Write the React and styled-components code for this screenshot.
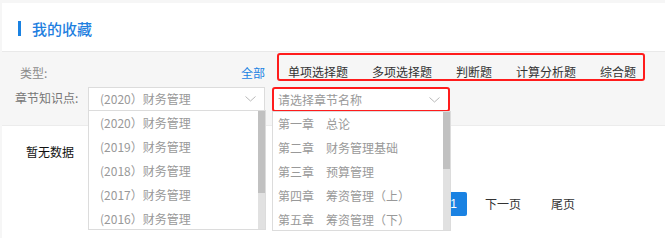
import React from "react";
import styled, { createGlobalStyle } from "styled-components";

const Global = createGlobalStyle`
  html, body { margin: 0; padding: 0; background: #f6f6f6; }
  body { font-family: "Noto Sans CJK SC", "Noto Sans", sans-serif; font-size: 12px; color: #333; }
  * { box-sizing: border-box; }
`;

const Page = styled.div`
  padding: 3px 0 0 2px;
  width: 680px;
  height: 238px;
  overflow: hidden;
`;

const HeaderCard = styled.div`
  height: 49px;
  background: #fff;
  border-bottom: 1px solid #e9e9e9;
  display: flex;
  align-items: center;
  padding: 2px 0 0 16px;
`;

const TitleBar = styled.span`
  width: 3px;
  height: 15px;
  background: #1a82e2;
  margin-right: 11px;
`;

const Title = styled.h1`
  margin: 0;
  font-size: 15px;
  line-height: 15px;
  font-weight: 500;
  color: #1f7fdf;
`;

const Filters = styled.div`
  padding: 1px 0 13px 0;
`;

const TypeRow = styled.div`
  display: flex;
  height: 28px;
`;

const RowLabel = styled.span`
  align-self: ${(p) => (p.$bottom ? "flex-end" : "flex-start")};
  padding-bottom: ${(p) => (p.$bottom ? "2px" : "0")};
  margin-top: ${(p) => (p.$bottom ? "0" : "5px")};
  margin-left: ${(p) => p.$left}px;
  width: ${(p) => p.$width}px;
  line-height: 12px;
  color: ${(p) => p.$color};
  white-space: nowrap;
`;

const AllLink = styled.a`
  align-self: flex-end;
  padding-bottom: 2px;
  line-height: 12px;
  color: #1a82e2;
  cursor: pointer;
`;

const TypeGroup = styled.div`
  margin-left: 12px;
  width: 368px;
  height: 28px;
  border: 2px solid #ff1c1c;
  border-radius: 3px;
  display: flex;
  gap: 24px;
  padding: 11px 0 0 9px;
`;

const TypeOption = styled.span`
  line-height: 12px;
  color: #333;
  white-space: nowrap;
  cursor: pointer;
`;

const ChapterRow = styled.div`
  display: flex;
  align-items: flex-start;
  margin-top: 6px;
  height: 25px;
`;

const SelectWrap = styled.div`
  position: relative;
  margin-left: ${(p) => p.$left || 0}px;
`;

const SelectBox = styled.div`
  width: ${(p) => p.$width}px;
  height: ${(p) => (p.$marked ? 25 : 24)}px;
  background: #fff;
  border: ${(p) => (p.$marked ? "2px solid #ff1c1c" : "1px solid #dcdcdc")};
  border-radius: ${(p) => (p.$marked ? "3px" : "0")};
  display: flex;
  align-items: center;
  justify-content: space-between;
  padding: 0 8px 0 ${(p) => (p.$marked ? 4 : 11)}px;
  color: #999;
  line-height: 14px;
`;

const Chevron = () => (
  <svg width="11" height="6" viewBox="0 0 11 6" fill="none">
    <path d="M0.5 0.5 L5.5 5 L10.5 0.5" stroke="#b8b8b8" strokeWidth="1" />
  </svg>
);

const Menu = styled.div`
  position: absolute;
  z-index: 5;
  left: 0;
  top: ${(p) => p.$top}px;
  width: ${(p) => p.$width}px;
  height: 120px;
  background: #fff;
  border: 1px solid #dcdcdc;
  overflow: hidden;
`;

const MenuList = styled.ul`
  margin: 0;
  padding: 0;
  list-style: none;
`;

const MenuItem = styled.li`
  height: 24px;
  line-height: 24px;
  padding-left: ${(p) => p.$pad}px;
  color: #999;
  white-space: nowrap;
`;

const ScrollTrack = styled.div`
  position: absolute;
  top: 0;
  right: 0;
  bottom: 0;
  width: 7px;
  background: #e1e1e1;
`;

const ScrollThumb = styled.div`
  width: 100%;
  background: #c1c1c1;
`;

const ContentCard = styled.div`
  background: #fff;
  border-top: 1px solid #ececec;
  height: 120px;
  padding-top: 18px;
`;

const Empty = styled.div`
  padding-left: 24px;
  line-height: 16px;
  color: #111;
`;

const Pager = styled.div`
  display: flex;
  margin-top: 32px;
  padding-left: 435px;
`;

const PageLink = styled.span`
  margin: 0 3px;
  height: 24px;
  line-height: 24px;
  padding: ${(p) => (p.$active ? "0" : "0 12px")};
  width: ${(p) => (p.$active ? "27px" : "auto")};
  text-align: center;
  background: ${(p) => (p.$active ? "#1a82e2" : "transparent")};
  color: ${(p) => (p.$active ? "#fff" : "#333")};
  border-radius: 2px;
  font-family: ${(p) => (p.$active ? '"Liberation Sans", sans-serif' : "inherit")};
`;

const types = ["单项选择题", "多项选择题", "判断题", "计算分析题", "综合题"];
const years = [2020, 2019, 2018, 2017, 2016];
const chapters = [
  "第一章　总论",
  "第二章　财务管理基础",
  "第三章　预算管理",
  "第四章　筹资管理（上）",
  "第五章　筹资管理（下）",
];

export default function App() {
  return (
    <Page>
      <Global />
      <HeaderCard>
        <TitleBar />
        <Title>我的收藏</Title>
      </HeaderCard>
      <Filters>
        <TypeRow>
          <RowLabel $bottom $left={18} $width={221} $color="#8c8c8c">
            类型:
          </RowLabel>
          <AllLink>全部</AllLink>
          <TypeGroup>
            {types.map((t) => (
              <TypeOption key={t}>{t}</TypeOption>
            ))}
          </TypeGroup>
        </TypeRow>
        <ChapterRow>
          <RowLabel $left={13} $width={73} $color="#777">
            章节知识点:
          </RowLabel>
          <SelectWrap>
            <SelectBox $width={177}>
              <span>(2020）财务管理</span>
              <Chevron />
            </SelectBox>
            <Menu $top={23} $width={178}>
              <MenuList>
                {years.map((y) => (
                  <MenuItem key={y} $pad={11}>
                    ({y}）财务管理
                  </MenuItem>
                ))}
              </MenuList>
              <ScrollTrack>
                <ScrollThumb style={{ height: 82 }} />
              </ScrollTrack>
            </Menu>
          </SelectWrap>
          <SelectWrap $left={7}>
            <SelectBox $width={178} $marked>
              <span>请选择章节名称</span>
              <Chevron />
            </SelectBox>
            <Menu $top={24} $width={179}>
              <MenuList>
                {chapters.map((c) => (
                  <MenuItem key={c} $pad={5}>
                    {c}
                  </MenuItem>
                ))}
              </MenuList>
              <ScrollTrack>
                <ScrollThumb style={{ height: 57 }} />
              </ScrollTrack>
            </Menu>
          </SelectWrap>
        </ChapterRow>
      </Filters>
      <ContentCard>
        <Empty>暂无数据</Empty>
        <Pager>
          <PageLink $active>1</PageLink>
          <PageLink>下一页</PageLink>
          <PageLink>尾页</PageLink>
        </Pager>
      </ContentCard>
    </Page>
  );
}
